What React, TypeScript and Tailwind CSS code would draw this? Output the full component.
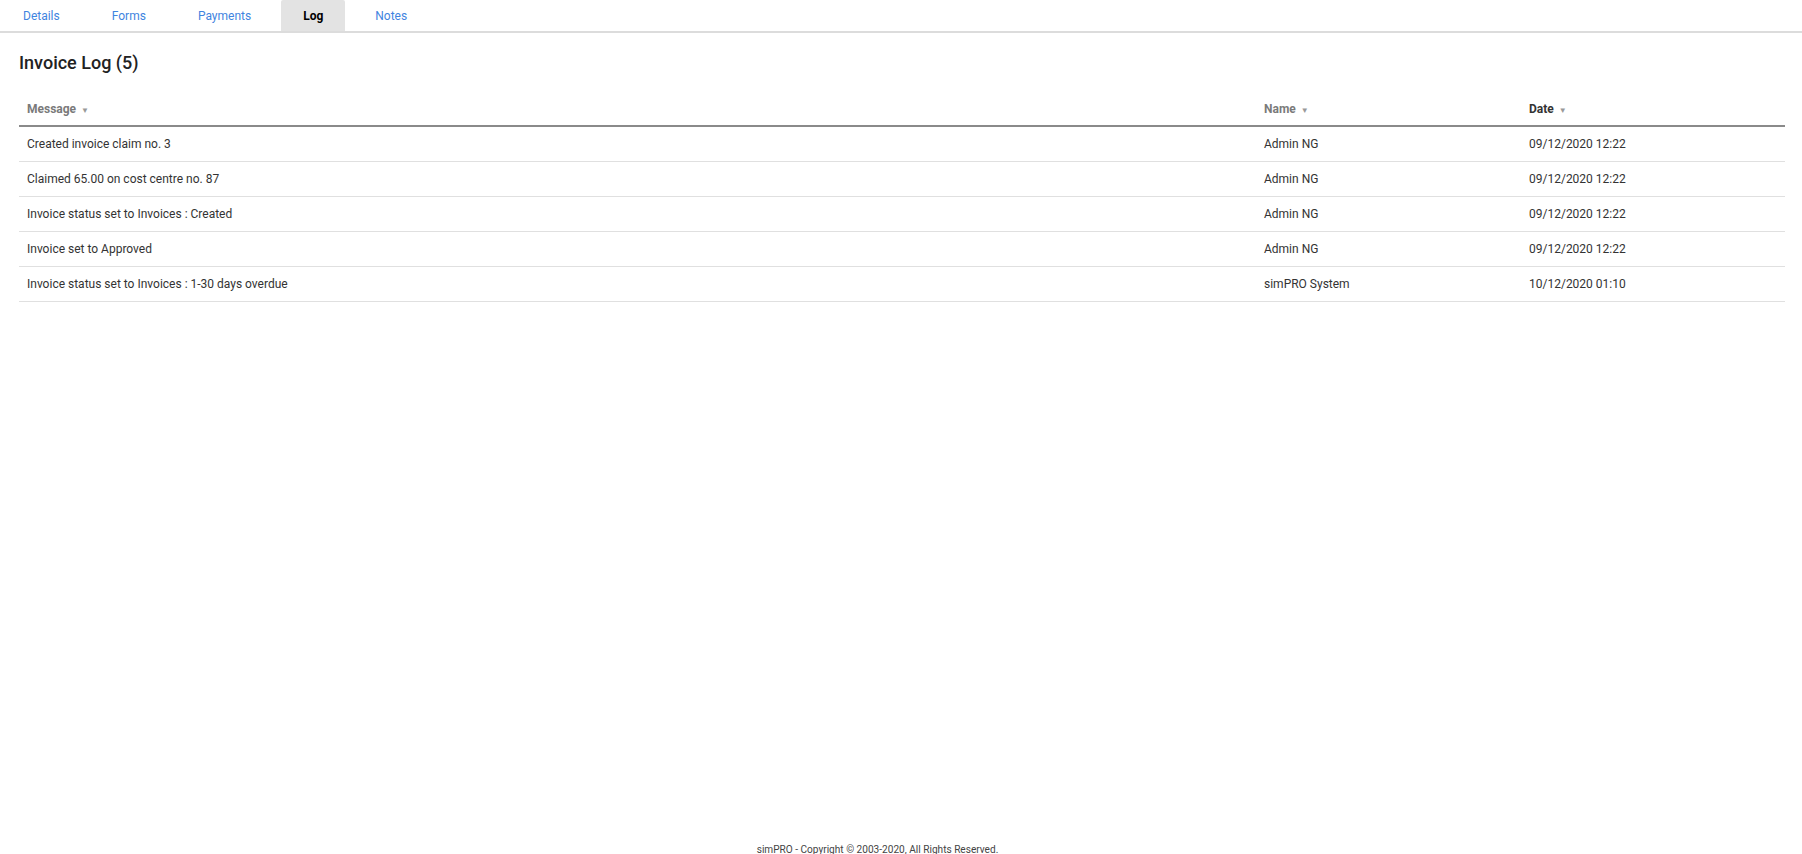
const tabs = ["Details", "Forms", "Payments", "Log", "Notes"];

const rows = [
  { message: "Created invoice claim no. 3", name: "Admin NG", date: "09/12/2020 12:22" },
  { message: "Claimed 65.00 on cost centre no. 87", name: "Admin NG", date: "09/12/2020 12:22" },
  { message: "Invoice status set to Invoices : Created", name: "Admin NG", date: "09/12/2020 12:22" },
  { message: "Invoice set to Approved", name: "Admin NG", date: "09/12/2020 12:22" },
  { message: "Invoice status set to Invoices : 1-30 days overdue", name: "simPRO System", date: "10/12/2020 01:10" },
];

function SortHeader({ label, active }: { label: string; active?: boolean }) {
  return (
    <span className={`font-bold ${active ? "text-[#333]" : "text-[#7a7a7a]"}`}>
      {label}
      <span className="ml-[5px] text-[8px] text-[#999]">▼</span>
    </span>
  );
}

export default function App() {
  return (
    <div
      className="flex min-h-screen flex-col bg-white text-[12px] text-[#333]"
      style={{ fontFamily: "Roboto, 'Liberation Sans', sans-serif" }}
    >
      <nav className="flex h-[33px] border-b-2 border-[#dcdcdc] pl-[1px]">
        {tabs.map((t) => (
          <div
            key={t}
            className={`mx-[4px] flex items-center rounded-t-[2px] px-[22px] first:ml-0 ${
              t === "Log" ? "bg-[#e3e3e3] font-bold text-black" : "text-[#3f84e0]"
            }`}
          >
            {t}
          </div>
        ))}
      </nav>

      <main className="flex-1 pl-[19px] pr-[17px] pt-[16px]">
        <h1 className="text-[18px] font-medium text-[#222]">Invoice Log (5)</h1>

        <table className="mt-[16px] w-full table-fixed border-collapse">
          <colgroup>
            <col className="w-[1237px]" />
            <col className="w-[265px]" />
            <col />
          </colgroup>
          <thead>
            <tr className="border-b-2 border-[#8a8a8a]">
              <th className="h-[34px] px-[8px] text-left">
                <SortHeader label="Message" />
              </th>
              <th className="px-[8px] text-left">
                <SortHeader label="Name" />
              </th>
              <th className="px-[8px] text-left">
                <SortHeader label="Date" active />
              </th>
            </tr>
          </thead>
          <tbody>
            {rows.map((r, i) => (
              <tr key={i} className="border-b border-[#e0e0e0]">
                <td className="h-[35px] px-[8px]">{r.message}</td>
                <td className="px-[8px]">{r.name}</td>
                <td className="px-[8px]">{r.date}</td>
              </tr>
            ))}
          </tbody>
        </table>
      </main>

      <footer className="-mb-[2px] pr-[47px] text-center text-[10.1px] leading-[12px] text-[#444]">
        simPRO - Copyright © 2003-2020, All Rights Reserved.
      </footer>
    </div>
  );
}
